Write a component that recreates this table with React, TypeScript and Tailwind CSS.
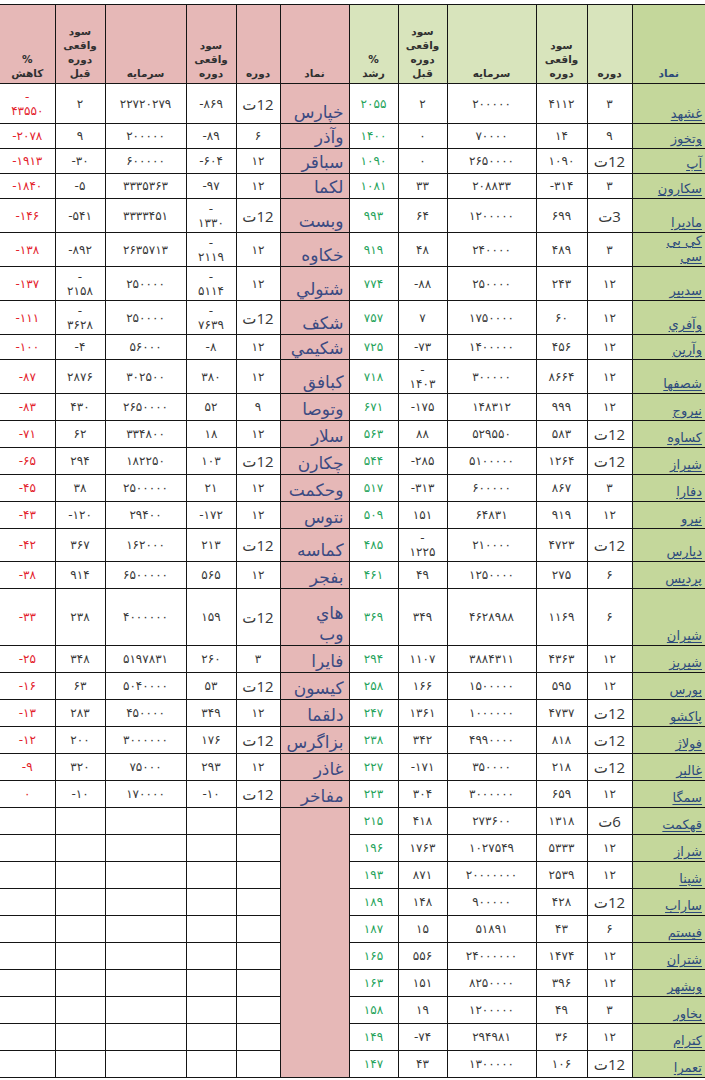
const FA = '۰۱۲۳۴۵۶۷۸۹';
const fa = (s: string) => s.replace(/[0-9]/g, (d) => FA[Number(d)]);

// [نماد, دوره, سود واقعی دوره, سرمایه, سود واقعی دوره قبل, درصد]
const growth: string[][] = [
  ['غشهد', '3', '4112', '200000', '2', '2055'],
  ['وتخوز', '9', '14', '70000', '0', '1400'],
  ['آپ', 'T12', '1090', '2650000', '0', '1090'],
  ['سکارون', '3', '-314', '208833', '33', '1081'],
  ['مادیرا', 'T3', '699', '1200000', '64', '993'],
  ['كي بي\nسي', '3', '489', '240000', '48', '919'],
  ['سدبیر', '12', '243', '250000', '-88', '774'],
  ['وآفري', '12', '60', '1750000', '7', '757'],
  ['وآرين', '12', '456', '1400000', '-73', '725'],
  ['شصفها', '12', '8664', '300000', '-\n1403', '718'],
  ['نیروج', '12', '999', '148312', '-175', '671'],
  ['کساوه', 'T12', '583', '529550', '88', '563'],
  ['شیراز', 'T12', '1264', '5100000', '-285', '544'],
  ['دفارا', '3', '867', '600000', '-313', '517'],
  ['نیرو', '12', '919', '64831', '151', '509'],
  ['دیارس', 'T12', '4723', '210000', '-\n1225', '485'],
  ['پردیس', '6', '275', '1250000', '49', '461'],
  ['شیران', '6', '1169', '4628988', '349', '369'],
  ['شیریز', '12', '4363', '3884311', '1107', '294'],
  ['بورس', '12', '595', '1500000', '166', '258'],
  ['پاکشو', 'T12', '4737', '1000000', '1361', '247'],
  ['فولاژ', 'T12', '818', '4990000', '342', '238'],
  ['غالبر', 'T12', '218', '350000', '-171', '227'],
  ['سمگا', '12', '659', '3000000', '304', '223'],
  ['قهکمت', 'T6', '1318', '273600', '418', '215'],
  ['شراز', '12', '5333', '1027549', '1763', '196'],
  ['شپنا', '12', '2539', '20000000', '871', '193'],
  ['ساراب', 'T12', '428', '900000', '148', '189'],
  ['فیستم', '6', '43', '51891', '15', '187'],
  ['شتران', '12', '1474', '24000000', '556', '165'],
  ['وبشهر', '12', '396', '8250000', '151', '163'],
  ['بخاور', '3', '49', '1200000', '19', '158'],
  ['کترام', '12', '36', '294981', '-74', '149'],
  ['تعمرا', 'T12', '106', '1300000', '43', '147'],
];

const decline: string[][] = [
  ['خپارس', 'T12', '-869', '22720279', '2', '-\n43550'],
  ['وآذر', '6', '-89', '200000', '9', '-2078'],
  ['سباقر', '12', '-604', '600000', '-30', '-1913'],
  ['لکما', '12', '-97', '3335363', '-5', '-1840'],
  ['وبست', 'T12', '-\n1330', '3333451', '-541', '-146'],
  ['خکاوه', '12', '-\n2119', '2635713', '-892', '-138'],
  ['شتولي', '12', '-\n5114', '250000', '-\n2158', '-137'],
  ['شکف', 'T12', '-\n7639', '250000', '-\n3628', '-111'],
  ['شکیمي', '12', '-8', '56000', '-4', '-100'],
  ['کبافق', '12', '380', '302500', '2876', '-87'],
  ['وتوصا', '9', '52', '2650000', '430', '-83'],
  ['سلار', '12', '18', '334800', '62', '-71'],
  ['چکارن', 'T12', '103', '182250', '294', '-65'],
  ['وحکمت', '12', '21', '2500000', '38', '-45'],
  ['نتوس', '12', '-172', '29400', '-120', '-43'],
  ['کماسه', 'T12', '213', '162000', '367', '-42'],
  ['بفجر', '12', '565', '6500000', '914', '-38'],
  ['هاي\nوب', 'T12', '159', '4000000', '238', '-33'],
  ['فایرا', '3', '260', '5197831', '348', '-25'],
  ['کیسون', 'T12', '53', '5040000', '63', '-16'],
  ['دلقما', '12', '349', '450000', '283', '-13'],
  ['بزاگرس', 'T12', '176', '3000000', '200', '-12'],
  ['غاذر', '12', '293', '75000', '320', '-9'],
  ['مفاخر', 'T12', '-10', '170000', '-10', '0'],
];

const rowH = [
  'h-[40px]', 'h-[25px]', 'h-[25px]', 'h-[25px]', 'h-[34px]', 'h-[34px]', 'h-[34px]', 'h-[34px]',
  'h-[25px]', 'h-[34px]', 'h-[27px]', 'h-[27px]', 'h-[27px]', 'h-[27px]', 'h-[27px]', 'h-[33px]',
  'h-[27px]', 'h-[57px]', 'h-[27px]', 'h-[27px]', 'h-[27px]', 'h-[27px]', 'h-[27px]', 'h-[27px]',
  'h-[27px]', 'h-[27px]', 'h-[27px]', 'h-[27px]', 'h-[27px]', 'h-[27px]', 'h-[27px]', 'h-[27px]',
  'h-[27px]', 'h-[27px]',
];

const line = 'border border-[#151515] p-0 leading-[14px]';

function Num({ v, tone }: { v: string; tone?: string }) {
  return (
    <div dir="ltr" className={`whitespace-pre-line text-center text-[12px] leading-[14px] ${tone ?? 'text-[#383838]'}`}>
      {fa(v)}
    </div>
  );
}

function Period({ v }: { v: string }) {
  if (!v.startsWith('T')) return <Num v={v} />;
  // ت on the left, the number on the right
  const text = `ت\u200e${v.slice(1)}`;
  return (
    <div dir="ltr" className="text-center text-[15px] leading-[18px] text-[#383838] font-['Open_Sans','DejaVu_Sans',sans-serif]">
      {text}
    </div>
  );
}

function HeadCell({ text, bg, extra = '', tone = 'text-[#303030]' }: { text: string; bg: string; extra?: string; tone?: string }) {
  return (
    <th className={`border border-[#151515] ${bg} ${extra} align-bottom pb-[3px] px-0 font-bold text-[10.5px] leading-[14px] whitespace-pre-line text-center ${tone}`}>
      {text}
    </th>
  );
}

export default function App() {
  return (
    <div className="w-[705px] h-[1080px] overflow-hidden bg-white pt-[4px] font-['DejaVu_Sans',sans-serif]">
      <table dir="rtl" className="border-collapse table-fixed w-[705px]">
        <colgroup>
          <col className="w-[73px]" />
          <col className="w-[45px]" />
          <col className="w-[51px]" />
          <col className="w-[89px]" />
          <col className="w-[49px]" />
          <col className="w-[49px]" />
          <col className="w-[69px]" />
          <col className="w-[44px]" />
          <col className="w-[50px]" />
          <col className="w-[81px]" />
          <col className="w-[50px]" />
          <col className="w-[55px]" />
        </colgroup>
        <thead>
          <tr className="h-[79px]">
            <HeadCell text="نماد" bg="bg-[#c4d79b]" extra="border-r-0" tone="text-[#2b4a7a]" />
            <HeadCell text="دوره" bg="bg-[#d8e4bc]" />
            <HeadCell text={'سود\nواقعی\nدوره'} bg="bg-[#d8e4bc]" />
            <HeadCell text="سرمایه" bg="bg-[#d8e4bc]" />
            <HeadCell text={'سود\nواقعی\nدوره\nقبل'} bg="bg-[#d8e4bc]" />
            <HeadCell text={'%\nرشد'} bg="bg-[#d8e4bc]" />
            <HeadCell text="نماد" bg="bg-[#e6b8b7]" />
            <HeadCell text="دوره" bg="bg-[#e6b8b7]" />
            <HeadCell text={'سود\nواقعی\nدوره'} bg="bg-[#e6b8b7]" />
            <HeadCell text="سرمایه" bg="bg-[#e6b8b7]" />
            <HeadCell text={'سود\nواقعی\nدوره\nقبل'} bg="bg-[#e6b8b7]" />
            <HeadCell text={'%\nکاهش'} bg="bg-[#e6b8b7]" extra="border-l-0" />
          </tr>
        </thead>
        <tbody>
          {growth.map((g, i) => {
            const d = decline[i];
            const last = i === growth.length - 1;
            return (
              <tr key={g[0]} className={rowH[i]}>
                <td className={`${line} border-r-0 bg-[#c4d79b] align-bottom pr-[3px] pb-[1px] text-right`}>
                  <div className="whitespace-pre-line text-[13px] leading-[16px] text-[#2c4a7c] underline underline-offset-2 decoration-[#2c4a7c]">
                    {g[0]}
                  </div>
                </td>
                <td className={`${line} align-middle`}>
                  <Period v={g[1]} />
                </td>
                <td className={`${line} align-middle`}>
                  <Num v={g[2]} />
                </td>
                <td className={`${line} align-middle`}>
                  <Num v={g[3]} />
                </td>
                <td className={`${line} align-middle`}>
                  <Num v={g[4]} />
                </td>
                <td className={`${line} align-middle`}>
                  <Num v={g[5]} tone="text-[#25a35a]" />
                </td>
                {d ? (
                  <>
                    <td className={`${line} bg-[#e6b8b7] align-bottom pr-[5px] text-right`}>
                      <div className="whitespace-pre-line text-[17px] leading-[21px] text-[#3b4a82]">{d[0]}</div>
                    </td>
                    <td className={`${line} align-middle`}>
                      <Period v={d[1]} />
                    </td>
                    <td className={`${line} align-middle`}>
                      <Num v={d[2]} />
                    </td>
                    <td className={`${line} align-middle`}>
                      <Num v={d[3]} />
                    </td>
                    <td className={`${line} align-middle`}>
                      <Num v={d[4]} />
                    </td>
                    <td className={`${line} border-l-0 align-middle`}>
                      <Num v={d[5]} tone="text-[#e3222c]" />
                    </td>
                  </>
                ) : (
                  <>
                    <td className={`border-x border-[#151515] p-0 bg-[#e6b8b7] ${last ? 'border-b' : ''}`} />
                    <td className={line} />
                    <td className={line} />
                    <td className={line} />
                    <td className={line} />
                    <td className={`${line} border-l-0`} />
                  </>
                )}
              </tr>
            );
          })}
        </tbody>
      </table>
    </div>
  );
}
